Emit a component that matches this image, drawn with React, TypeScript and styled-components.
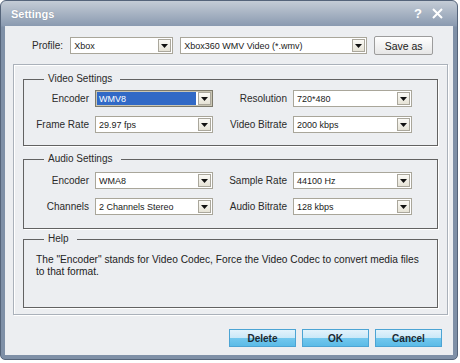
import React from 'react';
import styled, {createGlobalStyle} from 'styled-components';

const GlobalStyle = createGlobalStyle`
  html, body {
    margin: 0;
    padding: 0;
    background: #ffffff;
  }
  body {
    font-family: "Liberation Sans", Arial, sans-serif;
  }
`;

const Window = styled.div`
  width: 458px;
  height: 360px;
  box-sizing: border-box;
  border: 1px solid #55647a;
  border-radius: 6px 6px 5px 5px;
  background: linear-gradient(#c4ccd6, #8a9ab0 25px, #7f90a7 26px, #7f90a7);
  display: flex;
  flex-direction: column;
  overflow: hidden;
`;

const TitleBar = styled.div`
  height: 25px;
  flex: none;
  display: flex;
  align-items: center;
  padding: 0 12px 0 10px;
  color: #ffffff;
`;

const Title = styled.div`
  flex: 1;
  font-size: 11px;
  font-weight: bold;
  text-shadow: 0 0 1px rgba(60, 70, 90, 0.4);
`;

const TitleButton = styled.div`
  width: 16px;
  height: 16px;
  margin-left: 3px;
  display: flex;
  align-items: center;
  justify-content: center;
  font-size: 13px;
  font-weight: bold;
`;

const Client = styled.div`
  flex: 1;
  margin: 0 4px 4px;
  background: #eceef1;
  display: flex;
  flex-direction: column;
`;

const ProfileRow = styled.div`
  display: flex;
  align-items: center;
  gap: 7px;
  margin-top: 10px;
  padding-left: 27px;
  height: 19px;
`;

const Label = styled.span`
  font-size: 10px;
  color: #2a2a2a;
  white-space: nowrap;
`;

const Combo = styled.div<{$width: number; $focused?: boolean}>`
  width: ${p => p.$width}px;
  height: 17px;
  box-sizing: border-box;
  display: flex;
  align-items: center;
  background: #ffffff;
  border: 1px solid ${p => (p.$focused ? '#7d7a6c' : '#a9a69a')};
  box-shadow: ${p => (p.$focused ? 'inset 0 0 0 1px #c9c5b3' : 'none')};
  padding: 1px;
`;

const ComboText = styled.div<{$selected?: boolean}>`
  flex: 1;
  height: 100%;
  display: flex;
  align-items: center;
  padding-left: 2px;
  margin-right: 2px;
  font-size: 9px;
  color: ${p => (p.$selected ? '#ffffff' : '#1a1a1a')};
  background: ${p => (p.$selected ? '#3169c6' : 'transparent')};
  white-space: nowrap;
  overflow: hidden;
`;

const DropButton = styled.div`
  width: 13px;
  height: 13px;
  box-sizing: border-box;
  flex: none;
  border: 1px solid #aaa79c;
  background: linear-gradient(#fbfaf6, #e6e3d6);
  display: flex;
  align-items: center;
  justify-content: center;
`;

const SaveButton = styled.button`
  width: 59px;
  height: 19px;
  box-sizing: border-box;
  border: 1px solid #9c9c9c;
  border-radius: 2px;
  background: linear-gradient(#ffffff, #e6e6e6);
  font-family: "Liberation Sans", Arial, sans-serif;
  font-size: 10.5px;
  color: #1a1a1a;
  padding: 0;
`;

const Panel = styled.div`
  margin: 9px 5px 0 8px;
  height: 251px;
  box-sizing: border-box;
  border: 1px solid #aab1ba;
  box-shadow: inset 1px 1px 0 #ffffff, 1px 1px 0 #ffffff;
  padding: 8px 9px 0;
  display: flex;
  flex-direction: column;
`;

const Group = styled.fieldset<{$height: number; $gap: number}>`
  margin: 0 0 ${p => p.$gap}px;
  padding: 0;
  min-width: 0;
  height: ${p => p.$height}px;
  box-sizing: border-box;
  border: 1px solid #626262;
  box-shadow: 1px 1px 0 #ffffff;
`;

const Legend = styled.legend`
  margin-left: 20px;
  padding: 0 8px 0 4px;
  font-size: 10px;
  line-height: 12px;
  color: #2a2a2a;
`;

const FieldGrid = styled.div<{$top: number}>`
  display: grid;
  grid-template-columns: 65px 118px 68px 119px;
  column-gap: 6px;
  row-gap: 9px;
  align-items: center;
  padding-top: ${p => p.$top}px;
`;

const FieldLabel = styled(Label)`
  justify-self: end;
`;

const HelpText = styled.p`
  margin: 0;
  padding: 9px 16px 0 12px;
  font-size: 10.2px;
  line-height: 12px;
  color: #222222;
`;

const ButtonRow = styled.div`
  display: flex;
  justify-content: flex-end;
  gap: 6px;
  margin-top: 14px;
  padding-right: 11px;
`;

const ActionButton = styled.button`
  width: 67px;
  height: 18px;
  box-sizing: border-box;
  padding: 0;
  border: 1px solid #4ca4d4;
  background: linear-gradient(#e3f3fc, #c9e8f8 50%, #73c8ee 50%, #5bbbe7);
  font-family: "Liberation Sans", Arial, sans-serif;
  font-size: 10px;
  font-weight: bold;
  color: #1c2a33;
`;

const Arrow = () => (
  <svg width="7" height="4" viewBox="0 0 7 4">
    <path d="M0 0h7L3.5 4z" fill="#111" />
  </svg>
);

const Select: React.FC<{value: string; width: number; focused?: boolean}> = ({
  value,
  width,
  focused,
}) => (
  <Combo $width={width} $focused={focused}>
    <ComboText $selected={focused}>{value}</ComboText>
    <DropButton>
      <Arrow />
    </DropButton>
  </Combo>
);

type Field = {label: string; value: string; focused?: boolean};

const Fields: React.FC<{fields: Field[]; top: number}> = ({fields, top}) => (
  <FieldGrid $top={top}>
    {fields.map((f, i) => (
      <React.Fragment key={f.label + i}>
        <FieldLabel>{f.label}</FieldLabel>
        <Select value={f.value} width={i % 2 === 0 ? 118 : 119} focused={f.focused} />
      </React.Fragment>
    ))}
  </FieldGrid>
);

const videoFields: Field[] = [
  {label: 'Encoder', value: 'WMV8', focused: true},
  {label: 'Resolution', value: '720*480'},
  {label: 'Frame Rate', value: '29.97 fps'},
  {label: 'Video Bitrate', value: '2000 kbps'},
];

const audioFields: Field[] = [
  {label: 'Encoder', value: 'WMA8'},
  {label: 'Sample Rate', value: '44100 Hz'},
  {label: 'Channels', value: '2 Channels Stereo'},
  {label: 'Audio Bitrate', value: '128 kbps'},
];

export default function App() {
  return (
    <>
      <GlobalStyle />
      <Window>
        <TitleBar>
          <Title>Settings</Title>
          <TitleButton>?</TitleButton>
          <TitleButton>
            <svg width="11" height="11" viewBox="0 0 11 11">
              <path d="M1 1l9 9M10 1l-9 9" stroke="#fff" strokeWidth="2" />
            </svg>
          </TitleButton>
        </TitleBar>
        <Client>
          <ProfileRow>
            <Label>Profile:</Label>
            <Select value="Xbox" width={103} />
            <Select value="Xbox360 WMV Video (*.wmv)" width={187} />
            <SaveButton>Save as</SaveButton>
          </ProfileRow>
          <Panel>
            <Group $height={73} $gap={7}>
              <Legend>Video Settings</Legend>
              <Fields fields={videoFields} top={5} />
            </Group>
            <Group $height={76} $gap={4}>
              <Legend>Audio Settings</Legend>
              <Fields fields={audioFields} top={7} />
            </Group>
            <Group $height={75} $gap={0}>
              <Legend>Help</Legend>
              <HelpText>
                The "Encoder" stands for Video Codec, Force the Video Codec to convert media files
                to that format.
              </HelpText>
            </Group>
          </Panel>
          <ButtonRow>
            <ActionButton>Delete</ActionButton>
            <ActionButton>OK</ActionButton>
            <ActionButton>Cancel</ActionButton>
          </ButtonRow>
        </Client>
      </Window>
    </>
  );
}
